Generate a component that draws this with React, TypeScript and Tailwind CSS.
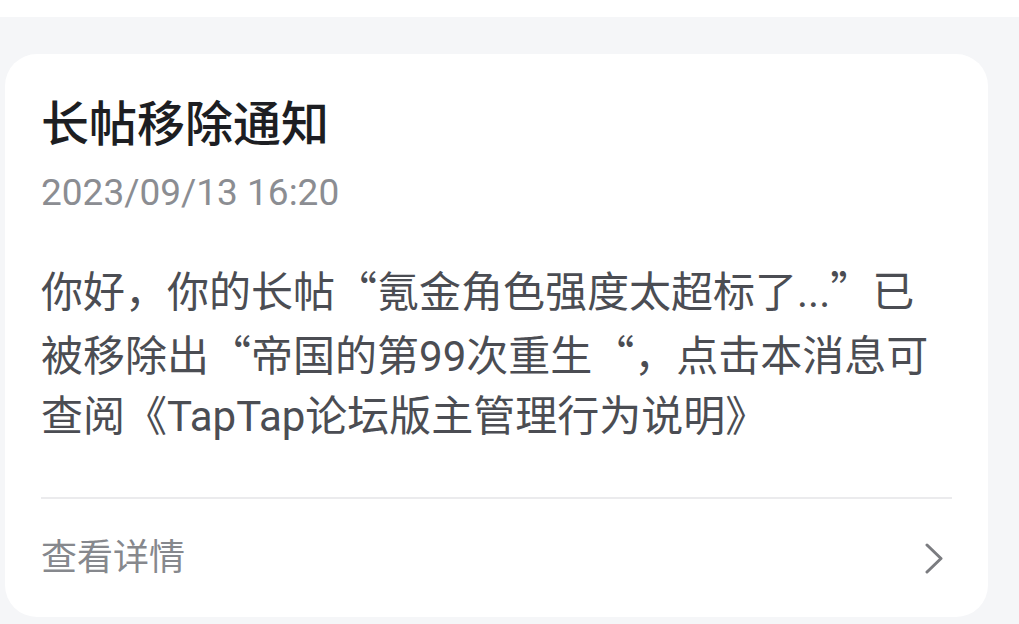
import React from "react";

const cjk = "font-['Noto_Sans_CJK_SC',sans-serif]";

const Q: React.FC<{ c: string }> = ({ c }) => <span className={cjk}>{c}</span>;

const App: React.FC = () => {
  return (
    <div className="w-[1019px] h-[624px] bg-white pt-[17px] overflow-hidden font-['Roboto','Noto_Sans_CJK_SC',sans-serif]">
      <div className="h-full bg-[#f5f6f8] pl-[5px] pr-[31px] pt-[37px]">

        {/* 通知卡片 */}
        <div className="bg-white rounded-[32px] px-[36px] pt-[43px] flex flex-col">

          <h1 className="h-[56px] text-[48px] leading-[56px] font-medium text-[#1d1e22] whitespace-nowrap">
            长帖移除通知
          </h1>

          <div className="mt-[18px] h-[44px] text-[37px] leading-[44px] text-[#8b8d92] whitespace-nowrap">
            2023/09/13 16:20
          </div>

          <div className="mt-[42px] text-[42px] leading-[64px] text-[#4b4d53] whitespace-nowrap">
            <div className="h-[64px]">
              你好，你的长帖<Q c="“" />氪金角色强度太超标了...<Q c="”" />已
            </div>
            <div className="h-[64px]">
              被移除出<Q c="“" />帝国的第99次重生<Q c="“" />，点击本消息可
            </div>
            <div className="h-[64px]">
              查阅《TapTap论坛版主管理行为说明》
            </div>
          </div>

          <div className="mt-[48px] h-[2px] bg-[#ebebed]" />

          <div className="h-[118px] flex items-center justify-between">
            <span className="text-[36px] text-[#86888d]">查看详情</span>
            <svg width="20" height="31" viewBox="0 0 20 31" fill="none" className="mr-[8px]">
              <polyline
                points="3,2 17,15.5 3,29"
                stroke="#7b7c80"
                strokeWidth="3"
                strokeLinecap="round"
                strokeLinejoin="round"
              />
            </svg>
          </div>

        </div>
      </div>
    </div>
  );
};

export default App;
